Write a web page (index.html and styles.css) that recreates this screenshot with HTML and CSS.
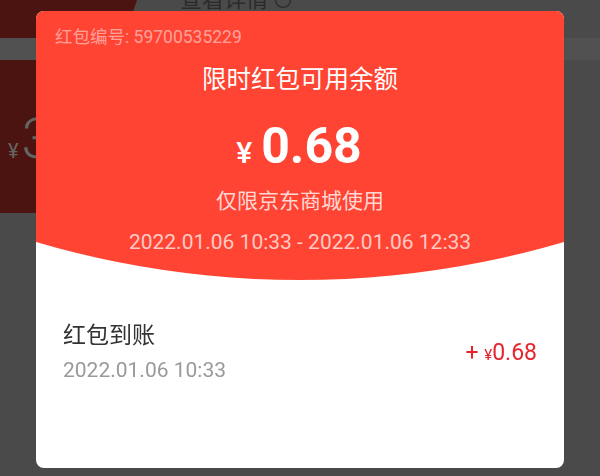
FILE: index.html
```html
<!DOCTYPE html>
<html lang="zh-CN">
<head>
<meta charset="utf-8">
<link rel="stylesheet" href="styles.css">
</head>
<body>
<div class="page">
  <div class="topbar">
    <div class="banner"></div>
    <span class="detail">查看详情 <svg class="info" width="18" height="18" viewBox="0 0 18 18"><circle cx="9" cy="9" r="7.5" fill="none" stroke="#2c2c2c" stroke-width="1.4"/></svg></span>
  </div>
  <div class="band"></div>
  <div class="coupon"><span class="c-yen">¥</span><span class="c-num">3</span></div>
</div>

<div class="modal">
  <div class="head">
    <div class="hid">红包编号: 59700535229</div>
    <div class="htitle">限时红包可用余额</div>
    <div class="hamt"><span class="yen">¥</span><span class="num">0.68</span></div>
    <div class="hnote">仅限京东商城使用</div>
    <div class="hdate">2022.01.06 10:33 - 2022.01.06 12:33</div>
  </div>
  <div class="body">
    <div class="row">
      <div class="rleft">
        <div class="rt">红包到账</div>
        <div class="rd">2022.01.06 10:33</div>
      </div>
      <div class="ra">+ <span class="ryen">¥</span>0.68</div>
    </div>
  </div>
</div>
</body>
</html>
```
FILE: styles.css
```css
* { box-sizing: border-box; }
html, body { margin: 0; padding: 0; }
body {
  width: 600px;
  height: 476px;
  overflow: hidden;
  background: #4a4a4a;
  font-family: Roboto, "Noto Sans CJK SC", sans-serif;
}
.page { width: 600px; }
.topbar {
  height: 38px;
  display: flex;
  align-items: flex-start;
}
.banner {
  width: 137px;
  height: 38px;
  background: #4b1410;
  clip-path: polygon(0 0, 100% 0, calc(100% - 13px) 100%, 0 100%);
}
.detail {
  margin-left: 43px;
  margin-top: -15px;
  font-size: 22px;
  line-height: 30px;
  color: #2a2a2a;
  display: flex;
  align-items: center;
  gap: 6px;
}
.band { height: 22px; background: #515151; }
.coupon {
  height: 153px;
  width: 120px;
  background: #4b1410;
  padding-left: 8px;
  padding-top: 51px;
  display: flex;
  align-items: baseline;
  color: #646464;
}
.c-yen { font-size: 20px; margin-right: 3px; }
.c-num { font-size: 56px; line-height: 56px; font-weight: 300; }

.modal {
  position: fixed;
  top: 11px;
  left: 36px;
  width: 528px;
  height: 457px;
  background: #fff;
  border-radius: 8px;
  overflow: hidden;
}
.head {
  height: 269px;
  background: #ff4433;
  clip-path: circle(936px at 50% -667px);
  padding-top: 14px;
  color: #fff;
}
.hid {
  padding-left: 19px;
  font-size: 17.5px;
  line-height: 24px;
  color: rgba(255, 255, 255, 0.5);
}
.htitle {
  margin-top: 15px;
  text-align: center;
  font-size: 24.5px;
  line-height: 32px;
}
.hamt {
  margin-top: 22px;
  display: flex;
  justify-content: center;
  align-items: baseline;
  line-height: 56px;
  padding-right: 2px;
}
.yen { font-size: 30px; font-weight: 500; margin-right: 9px; }
.num { font-size: 50px; font-weight: 700; }
.hnote {
  margin-top: 6px;
  text-align: center;
  font-size: 21px;
  line-height: 28px;
  color: rgba(255, 255, 255, 0.8);
}
.hdate {
  margin-top: 13px;
  text-align: center;
  font-size: 21px;
  line-height: 28px;
  color: rgba(255, 255, 255, 0.72);
}
.body { padding: 41px 27px 0 27px; }
.row {
  display: flex;
  justify-content: space-between;
  align-items: center;
}
.rt {
  font-size: 23px;
  line-height: 30px;
  color: #333;
}
.rd {
  margin-top: 5px;
  font-size: 21px;
  line-height: 28px;
  color: #9a9a9a;
}
.ra {
  font-size: 23px;
  color: #e4252d;
}
.ryen { font-size: 15px; }
```
